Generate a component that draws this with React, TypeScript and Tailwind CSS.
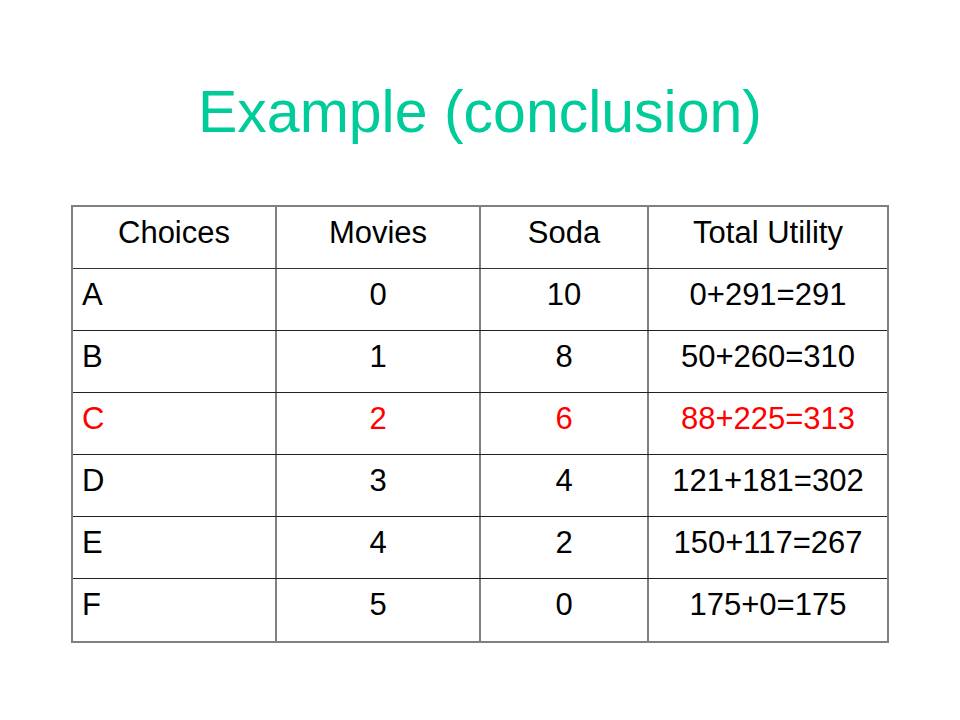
const rows = [
  { c: "A", m: "0", s: "10", t: "0+291=291" },
  { c: "B", m: "1", s: "8", t: "50+260=310" },
  { c: "C", m: "2", s: "6", t: "88+225=313", hl: true },
  { c: "D", m: "3", s: "4", t: "121+181=302" },
  { c: "E", m: "4", s: "2", t: "150+117=267" },
  { c: "F", m: "5", s: "0", t: "175+0=175" },
];

export default function App() {
  return (
    <div
      className="w-[960px] h-[720px] bg-white pt-[83px]"
      style={{ fontFamily: '"Liberation Sans", Arial, sans-serif' }}
    >
      <h1 className="text-center text-[59px] leading-none text-[#00cc99]">
        Example (conclusion)
      </h1>

      <div className="mt-[63px] ml-[71px] w-[818px] border-2 border-[#808080] text-[31px] leading-none text-black">
        <div className="flex h-[62px] border-b border-[#333]">
          <div className="w-[204px] pt-[10px] text-center border-r-2 border-[#808080]">Choices</div>
          <div className="w-[204px] pt-[10px] text-center border-r-2 border-[#808080]">Movies</div>
          <div className="w-[168px] pt-[10px] text-center border-r-2 border-[#808080]">Soda</div>
          <div className="flex-1 pt-[10px] text-center">Total Utility</div>
        </div>
        {rows.map((r, i) => (
          <div
            key={r.c}
            className={`flex h-[62px] ${i < rows.length - 1 ? "border-b border-[#222]" : ""} ${r.hl ? "text-[#f00]" : ""}`}
          >
            <div className="w-[204px] pt-[10px] pl-[9px] border-r-2 border-[#808080]">{r.c}</div>
            <div className="w-[204px] pt-[10px] text-center border-r-2 border-[#808080]">{r.m}</div>
            <div className="w-[168px] pt-[10px] text-center border-r-2 border-[#808080]">{r.s}</div>
            <div className="flex-1 pt-[10px] text-center">{r.t}</div>
          </div>
        ))}
      </div>
    </div>
  );
}
